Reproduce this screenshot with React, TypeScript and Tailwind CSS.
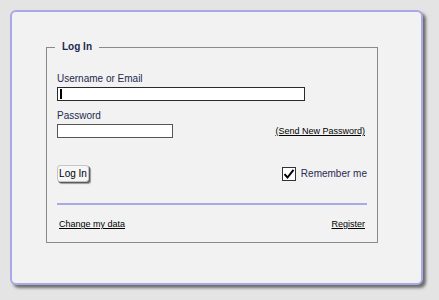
export default function App() {
  return (
    <div className="w-[439px] h-[300px] bg-[#e4e4e4] pt-[10px] pl-[10px] font-['Liberation_Sans',Arial,sans-serif] text-[10px]">
      <div className="w-[413px] h-[275px] bg-[#f2f2f2] border-2 border-[#a9a9ea] rounded-[6px] shadow-[3px_3px_3px_#6e6e6e] pt-[28px] pl-[34px]">
        <fieldset className="w-[332px] border border-[#8a8a8a] px-[10px] pt-[19px] pb-[12px]">
          <legend className="ml-[-2px] px-[7px] font-bold text-[#1e2a4e] leading-[14px]">Log In</legend>

          <div className="text-[#1e2a4e] leading-[12px]">Username or Email</div>
          <div className="mt-[2px] w-[248px] h-[14px] bg-white border border-[#2a2a2a] flex items-center">
            <div className="ml-[2px] w-[2px] h-[10px] bg-black" />
          </div>

          <div className="mt-[9px] text-[#1e2a4e] leading-[12px]">Password</div>
          <div className="mt-[2px] flex items-center justify-between">
            <div className="w-[116px] h-[14px] bg-white border border-[#555]" />
            <a className="underline text-black text-[9px] leading-[12px] mr-[2px]">(Send New Password)</a>
          </div>

          <div className="mt-[27px] flex items-center justify-between">
            <button className="w-[32px] h-[17px] bg-[#f6f6f6] border border-[#c4c4c4] rounded-[3px] shadow-[1px_1px_0_#5a5a5a,2px_2px_1px_#9a9a9a] text-black leading-[12px] text-[10px]">
              Log In
            </button>
            <div className="flex items-center">
              <div className="w-[14px] h-[14px] bg-white border border-[#333] flex items-center justify-center">
                <svg width="12" height="12" viewBox="0 0 12 12">
                  <path d="M1.5 6.2 L4.5 9.5 L10.5 1.8" fill="none" stroke="#000" strokeWidth="2" />
                </svg>
              </div>
              <span className="ml-[5px] text-[#2a2a52] leading-[12px]">Remember me</span>
            </div>
          </div>

          <div className="mt-[21px] h-[2px] bg-[#a9a9ea]" />

          <div className="mt-[13px] flex items-center justify-between text-[9px] leading-[12px]">
            <a className="underline text-black ml-[2px]">Change my data</a>
            <a className="underline text-black mr-[2px]">Register</a>
          </div>
        </fieldset>
      </div>
    </div>
  );
}
